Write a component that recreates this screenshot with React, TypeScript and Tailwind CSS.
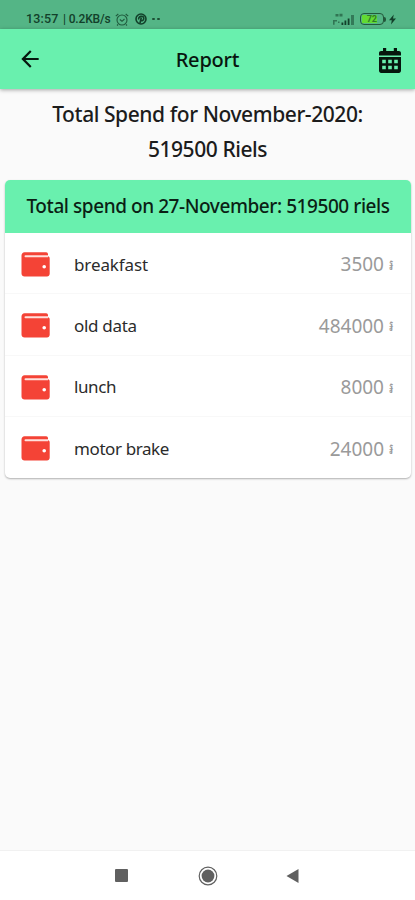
import React from 'react';
import { MdArrowBack } from 'react-icons/md';

const expenses = [
  { id: 1, name: 'breakfast', amount: 3500, nameClass: 'tracking-[-0.1px]' },
  { id: 2, name: 'old data', amount: 484000, nameClass: 'tracking-[-0.3px]' },
  { id: 3, name: 'lunch', amount: 8000, nameClass: 'tracking-[-0.4px]' },
  { id: 4, name: 'motor brake', amount: 24000, nameClass: 'tracking-[-0.4px]' },
];

const AlarmIcon: React.FC = () => (
  <svg className="ml-[3px] h-[13px] w-[14px]" viewBox="0 0 14 13" fill="none" stroke="#1f5a3d" strokeWidth="1.1">
    <circle cx="7" cy="7" r="5" />
    <path d="M.8 3.2 3.3 1M13.2 3.2 10.7 1M4.8 6.5 7 8.3 9.5 6M3 11.5l-1 1M11 11.5l1 1" />
  </svg>
);

const PinIcon: React.FC = () => (
  <svg className="ml-[6px] h-[12px] w-[12px]" viewBox="0 0 12 12" fill="none" stroke="#12402a">
    <circle cx="6" cy="6" r="5" strokeWidth="1.6" />
    <path d="M3.8 6.6C2.6 3.2 8.7 1.9 8.8 5.2 8.8 7.8 6.5 8 5.9 7M6.3 4.5 4.9 10.4" strokeWidth="1.6" />
  </svg>
);

const CalendarIcon: React.FC = () => (
  <svg className="mt-[2px] h-[25px] w-[22px]" viewBox="0 0 22 25" fill="#06170e">
    <path d="M4 0h3.2v3h7.6V0H18v3h1.9C21.1 3 22 3.9 22 5v2.5H0V5c0-1.1.9-2 2.1-2H4z" />
    <path
      fillRule="evenodd"
      d="M0 9h22v13.8c0 1.2-.9 2.2-2.1 2.2H2.1C.9 25 0 24 0 22.8zM3.2 11.8v3.4h3.6v-3.4zM9.2 11.8v3.4h3.6v-3.4zM15.2 11.8v3.4h3.6v-3.4zM3.2 17.8v3.4h3.6v-3.4zM9.2 17.8v3.4h3.6v-3.4zM15.2 17.8v3.4h3.6v-3.4z"
    />
  </svg>
);

const WalletIcon: React.FC = () => (
  <svg className="h-[25px] w-[29px] shrink-0" viewBox="0 0 29 25">
    <path
      d="M3.5.3h21.7c1 0 1.8.8 1.8 1.9v2c1 .2 1.7 1 1.7 2v15.5c0 1.6-1.2 2.8-2.7 2.8H3.5C1.9 24.5.5 23.200.5 21.500V3.400C.5 1.700 1.800.300 3.500.300z"
      fill="#f44336"
    />
    <path d="M4.500 3.200H27v2H4.500a1 1 0 0 1 0-2z" fill="#ffe1dd" />
    <circle cx="23.200" cy="14.800" r="1.800" fill="#fff" />
  </svg>
);

const StatusBar: React.FC = () => (
  <div className="flex h-[29px] items-center bg-[#54b586] pt-[9px] pr-[19px] pl-[26px] font-['Roboto',sans-serif] text-[12px] font-medium text-[#12402a]">
    <span className="w-[34px] text-[12.5px] tracking-[0.15px] whitespace-nowrap">13:57</span>
    <span className="ml-[3px] w-[49px] text-[12px] tracking-[-0.15px] whitespace-nowrap">| 0.2KB/s</span>
    <AlarmIcon />
    <PinIcon />
    <span className="ml-[5px] flex gap-[2px]">
      <i className="h-[2px] w-[3px] rounded-full bg-[#1c5034]" />
      <i className="h-[2px] w-[3px] rounded-full bg-[#1c5034]" />
    </span>
    <svg className="ml-auto h-[13px] w-[22px]" viewBox="0 0 22 13" fill="#12402a">
      <path d="M8.5 9.5h1.8v2.5H8.5zM11.5 7.500h1.800v4.500h-1.800zM14.700 5.500h1.800v6.500h-1.800z" />
      <path d="M18 2h3v10h-3z" opacity=".5" />
      <path d="M2.500 1h3v2.400h-3zM6.500.800h3V3.600h-3zM0 7h4v1.500H1.600v3.300H0zM5 8.500h1.500V10H5z" opacity=".55" />
    </svg>
    <div className="ml-[5px] flex h-[12px] w-[24px] items-center rounded-[4px] border-[1.5px] border-[#23583b] p-[1px]">
      <span className="flex h-full w-[15px] items-center justify-end bg-[#62da32] text-[9px] leading-none font-bold text-[#2f7a2a]">
        72
      </span>
    </div>
    <span className="h-[5px] w-[2px] rounded-r-sm bg-[#23583b]" />
    <svg className="ml-[3px] h-[11px] w-[7px]" viewBox="0 0 7 11" fill="#12402a">
      <path d="M4.800.500 0 6.300h2.800L2 10.500 7 4.600H4z" />
    </svg>
  </div>
);

const AppBar: React.FC = () => (
  <header className="flex h-[60px] items-center justify-between bg-[#69f0ae] pr-[14px] pl-[17px] shadow-[0_1px_4px_rgba(0,0,0,0.35)]">
    <MdArrowBack className="h-[26px] w-[26px] text-[#06170e]" />
    <h1 className="mt-[2px] mr-[7px] font-['Noto_Sans','Open_Sans',sans-serif] text-[20px] leading-none font-medium tracking-[-0.2px] text-[#08160f]">
      Report
    </h1>
    <CalendarIcon />
  </header>
);

const ExpenseList: React.FC = () => (
  <section className="mt-[13px] mr-[4px] ml-[5px] overflow-hidden rounded-[5px] bg-white shadow-[0_1px_2px_rgba(0,0,0,0.3)]">
    <h2 className="flex h-[53px] items-center justify-center bg-[#69f0ae] text-[19px] font-medium tracking-[-0.43px] whitespace-nowrap text-[#0b1f15]">
      Total spend on 27-November: 519500 riels
    </h2>
    <ul>
      {expenses.map(expense => (
        <li
          key={expense.id}
          className="flex h-[61.25px] items-center border-b border-[#f8f8f8] pt-[3px] pr-[17px] pl-[16px] last:border-b-0"
        >
          <WalletIcon />
          <span className={`ml-[24px] text-[17px] whitespace-nowrap text-[#2b2b2b] ${expense.nameClass}`}>
            {expense.name}
          </span>
          <span className="ml-auto flex items-center text-[19px] whitespace-nowrap text-[#9a9a9a]">
            {expense.amount}
            <span className="ml-[5px] text-[15px] leading-none">៛</span>
          </span>
        </li>
      ))}
    </ul>
  </section>
);

const NavigationBar: React.FC = () => (
  <nav className="mt-auto flex h-[50px] items-center border-t border-[#f1f1f1] bg-white pl-[115px] text-[#606060]">
    <span className="h-[13px] w-[13px] rounded-[1px] bg-current" />
    <svg className="ml-[70px] h-[20px] w-[20px]" viewBox="0 0 20 20">
      <circle cx="10" cy="10" r="8.800" fill="none" stroke="currentColor" strokeWidth="1.2" />
      <circle cx="10" cy="10" r="6.400" fill="currentColor" />
    </svg>
    <svg className="ml-[68px] h-[14px] w-[13px]" viewBox="0 0 13 14">
      <path d="M.5 7 12.500 0v14z" fill="currentColor" />
    </svg>
  </nav>
);

const App: React.FC = () => {
  return (
    <div className="flex h-[900px] w-[415px] flex-col overflow-hidden bg-[#fafafa] font-['Noto_Sans','Open_Sans',sans-serif]">
      <StatusBar />
      <AppBar />
      <div className="mt-[8px] text-center text-[21px] leading-[35px] font-medium tracking-[-0.43px] text-[#1c1c1c]">
        <p>Total Spend for November-2020:</p>
        <p>519500 Riels</p>
      </div>
      <ExpenseList />
      <NavigationBar />
    </div>
  );
};

export default App;
